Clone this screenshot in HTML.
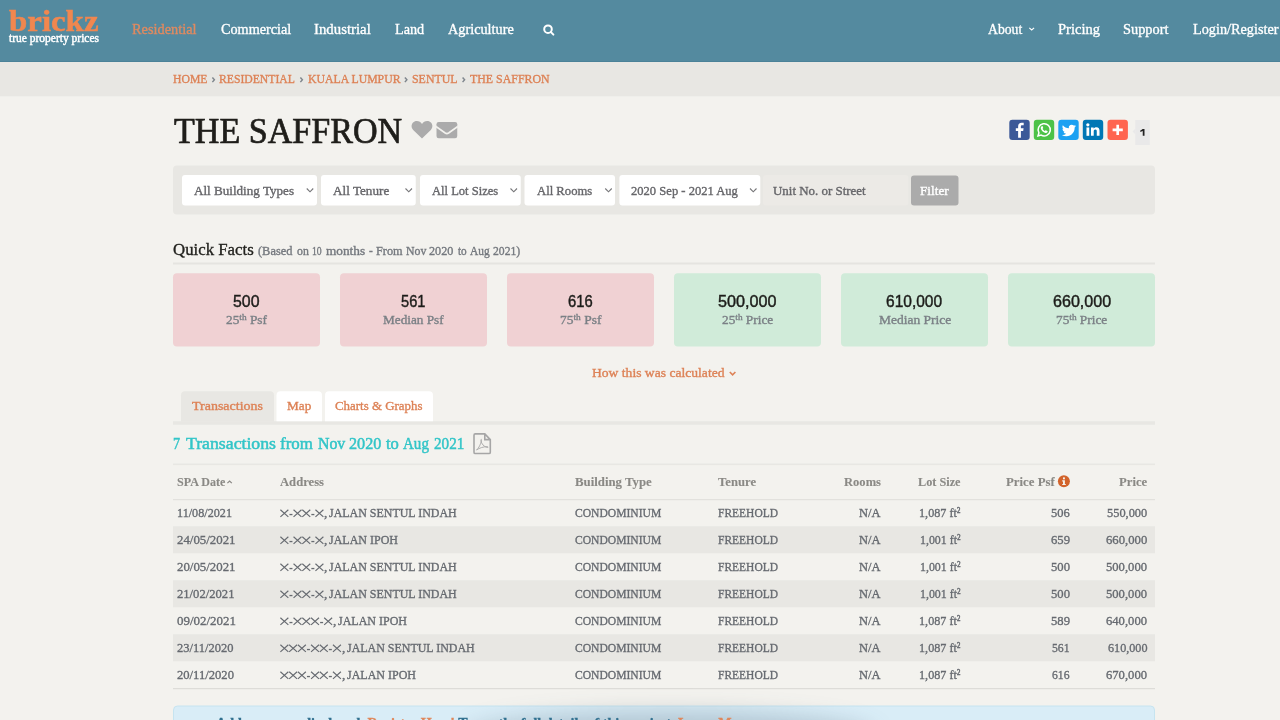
<!DOCTYPE html>
<html lang="en"><head><meta charset="utf-8"><title>THE SAFFRON - brickz</title>
<style>
html,body{margin:0;padding:0;width:1280px;height:720px;overflow:hidden;}
body{width:1280px;height:720px;overflow:hidden;position:relative;background:#f3f2ee;font-family:"Liberation Serif",serif;}
.t{position:absolute;white-space:nowrap;line-height:1;transform-origin:0 50%;-webkit-text-stroke:0.35px;}
.b{position:absolute;}
.L{position:absolute;left:0;top:0;width:1280px;height:720px;overflow:hidden;will-change:transform;}
svg{position:absolute;overflow:hidden;}
.W{position:absolute;left:0;top:0;width:1280px;height:720px;overflow:hidden;background:#f3f2ee;}
i.m{display:inline-block;width:0;height:0;}
sup{font-size:70%;line-height:0;vertical-align:baseline;position:relative;top:-0.5em;}
</style></head><body>
<div class="W">
<svg width="1280" height="720" viewBox="0 0 1280 720" style="left:0;top:0">
<rect x="0" y="0" width="1280" height="62" fill="#548a9f"/>
<rect x="0" y="61" width="1280" height="1" fill="#4b8298"/>
<rect x="0" y="62" width="1280" height="34.3" fill="#e8e7e3"/>
<g transform="translate(542.90,24.80) scale(1.0000,1.0000)"><circle cx="5.1" cy="4.4" r="3.8" fill="none" stroke="#fff" stroke-width="2"/><path d="M8 7.3 L10.5 9.8" stroke="#fff" stroke-width="2" stroke-linecap="round"/></g>
<g transform="translate(1028.60,27.30) scale(0.8857,0.8750)"><path d="M0.8 0.6 L3.5 3 L6.2 0.6" fill="none" stroke="#fff" stroke-width="1.3"/></g>
<g transform="translate(211.70,77.00) scale(0.8500,0.8000)"><path d="M0.8 0.6 L3.2 3.5 L0.8 6.4" fill="none" stroke="#7f868d" stroke-width="1.7"/></g>
<g transform="translate(299.70,77.00) scale(0.8500,0.8000)"><path d="M0.8 0.6 L3.2 3.5 L0.8 6.4" fill="none" stroke="#7f868d" stroke-width="1.7"/></g>
<g transform="translate(404.20,77.00) scale(0.8500,0.8000)"><path d="M0.8 0.6 L3.2 3.5 L0.8 6.4" fill="none" stroke="#7f868d" stroke-width="1.7"/></g>
<g transform="translate(461.90,77.00) scale(0.8500,0.8000)"><path d="M0.8 0.6 L3.2 3.5 L0.8 6.4" fill="none" stroke="#7f868d" stroke-width="1.7"/></g>
<g transform="translate(411.50,120.80) scale(1.0500,1.0353)"><path d="M10 17 L1.6 8.8 C-0.8 6.2 -0.3 2.2 2.9 0.7 C5.5 -0.5 8.6 0.6 10 3.1 C11.4 0.6 14.5 -0.5 17.1 0.7 C20.3 2.2 20.8 6.2 18.4 8.8 Z" fill="#ababab"/></g>
<g transform="translate(436.50,122.10) scale(1.0000,1.0286)"><rect x="0" y="0" width="20.75" height="15.75" rx="2.2" fill="#ababab"/><path d="M-0.5 4.3 L8.7 10.6 Q10.4 11.7 12.1 10.6 L21.25 4.3" fill="none" stroke="#f3f2ee" stroke-width="1.6"/></g>
<g transform="translate(1009.30,119.70) scale(1.0200,1.0200)"><rect width="20" height="20" rx="3" fill="#3b5998"/><path fill="#fff" transform="translate(-0.85,-0.75) scale(1.08)" d="M11.3 17 v-6.1 h2.1 l0.35-2.5 h-2.45 V6.9 c0-0.75 0.25-1.2 1.3-1.2 h1.25 V3.45 c-0.25-0.03-1-0.1-1.9-0.1 c-1.9 0-3.15 1.15-3.15 3.25 v1.8 H6.7 v2.5 h2.1 V17 z"/></g>
<g transform="translate(1033.80,119.70) scale(1.0200,1.0200)"><rect width="20" height="20" rx="3" fill="#4dc247"/><path fill="none" stroke="#fff" stroke-width="1.5" d="M4.1 15.9 L5 12.9 A6 6 0 1 1 7.2 15.1 Z"/><path fill="#fff" d="M7.6 6.6 c0.3-0.5 0.9-0.5 1.1 0 l0.5 1.2 c0.1 0.3 0 0.5-0.2 0.7 l-0.4 0.4 c0.4 0.9 1.3 1.8 2.3 2.3 l0.5-0.6 c0.2-0.2 0.4-0.3 0.7-0.1 l1.2 0.6 c0.4 0.2 0.4 0.6 0.2 1 c-0.4 0.7-1.2 1-2 0.9 c-2.300-0.400-4.300-2.400-4.700-4.600 c-0.100-0.700 0.200-1.400 0.800-1.800 z"/></g>
<g transform="translate(1058.30,119.70) scale(1.0200,1.0200)"><rect width="20" height="20" rx="3" fill="#1da1f2"/><g transform="translate(3.5,3.6) scale(0.58)"><path fill="#fff" d="M23.953 4.57a10 10 0 01-2.825.775 4.958 4.958 0 002.163-2.723c-.951.555-2.005.959-3.127 1.184a4.920 4.920 0 00-8.384 4.482C7.690 8.095 4.067 6.130 1.640 3.162a4.822 4.822 0 00-.666 2.475c0 1.710.870 3.213 2.188 4.096a4.904 4.904 0 01-2.228-.616v.060a4.923 4.923 0 003.946 4.827 4.996 4.996 0 01-2.212.085 4.936 4.936 0 004.604 3.417 9.867 9.867 0 01-6.102 2.105c-.390 0-.779-.023-1.170-.067a13.995 13.995 0 007.557 2.209c9.053 0 13.998-7.496 13.998-13.985 0-.210 0-.420-.015-.630A9.935 9.935 0 0024 4.590z"/></g></g>
<g transform="translate(1082.80,119.70) scale(1.0200,1.0200)"><rect width="20" height="20" rx="3" fill="#0077b5"/><rect x="3.6" y="7.6" width="2.7" height="8.2" fill="#fff"/><circle cx="4.95" cy="5" r="1.6" fill="#fff"/><path fill="#fff" d="M8 7.6 h2.6 v1.15 c0.5-0.85 1.5-1.4 2.7-1.4 c2.300 0 3.100 1.400 3.100 3.700 V15.800 h-2.700 v-4.200 c0-1.100-0.200-2-1.400-2 c-1.200 0-1.600 0.900-1.600 2 v4.200 H8 z"/></g>
<g transform="translate(1107.50,119.70) scale(1.0200,1.0200)"><rect width="20" height="20" rx="3" fill="#ff6550"/><path d="M10 5 V15 M5 10 H15" stroke="#fff" stroke-width="2.6"/></g>
<rect x="1135.3" y="120" width="14.5" height="25" fill="#e9e9e9"/>
<g transform="translate(1132.50,128.50) scale(1.0000,1.0000)"><path d="M3 0 L0 3 L3 6 Z" fill="#e9e9e9"/></g>
<g transform="translate(1140.30,129.00) scale(1.0000,1.0000)"><path d="M2.3 0 H4.2 V6.7 H2.45 V2.1 L0 2.9 V1.45 Q1.6 1 2.3 0 Z" fill="#222"/></g>
<rect x="173" y="165.5" width="982" height="49" rx="4.0" fill="#e8e7e3"/>
<rect x="182" y="175" width="135" height="30.5" rx="3.0" fill="#ffffff"/>
<g transform="translate(306.25,188.00) scale(1.0000,1.0000)"><path d="M0.5 0.5 L3.75 3.8 L7 0.5" fill="none" stroke="#77777a" stroke-width="1.15"/></g>
<rect x="321" y="175" width="94.75" height="30.5" rx="3.0" fill="#ffffff"/>
<g transform="translate(405.00,188.00) scale(1.0000,1.0000)"><path d="M0.5 0.5 L3.75 3.8 L7 0.5" fill="none" stroke="#77777a" stroke-width="1.15"/></g>
<rect x="420" y="175" width="100.75" height="30.5" rx="3.0" fill="#ffffff"/>
<g transform="translate(510.00,188.00) scale(1.0000,1.0000)"><path d="M0.5 0.5 L3.75 3.8 L7 0.5" fill="none" stroke="#77777a" stroke-width="1.15"/></g>
<rect x="524.5" y="175" width="90.5" height="30.5" rx="3.0" fill="#ffffff"/>
<g transform="translate(604.75,188.00) scale(1.0000,1.0000)"><path d="M0.5 0.5 L3.75 3.8 L7 0.5" fill="none" stroke="#77777a" stroke-width="1.15"/></g>
<rect x="619.4" y="175" width="140.9" height="30.5" rx="3.0" fill="#ffffff"/>
<g transform="translate(749.50,188.00) scale(1.0000,1.0000)"><path d="M0.5 0.5 L3.75 3.8 L7 0.5" fill="none" stroke="#77777a" stroke-width="1.15"/></g>
<rect x="763" y="175" width="145.4" height="30.5" rx="3.0" fill="#eceae6"/>
<rect x="911" y="175.5" width="47.5" height="30" rx="3.0" fill="#ababab"/>
<rect x="173" y="262.5" width="982" height="2" fill="#e5e4e0"/>
<rect x="173" y="273.2" width="147" height="73.3" rx="4.0" fill="#f0d1d3"/>
<rect x="340" y="273.2" width="147" height="73.3" rx="4.0" fill="#f0d1d3"/>
<rect x="507" y="273.2" width="147" height="73.3" rx="4.0" fill="#f0d1d3"/>
<rect x="674" y="273.2" width="147" height="73.3" rx="4.0" fill="#d0ebd9"/>
<rect x="841" y="273.2" width="147" height="73.3" rx="4.0" fill="#d0ebd9"/>
<rect x="1008" y="273.2" width="147" height="73.3" rx="4.0" fill="#d0ebd9"/>
<g transform="translate(729.30,371.60) scale(1.0000,1.0000)"><path d="M0.5 0.4 L3.3 3.2 L6.1 0.4" fill="none" stroke="#dd8256" stroke-width="1.6"/></g>
<rect x="173" y="421.25" width="982" height="3.5" fill="#e8e7e3"/>
<path d="M181 421.75 V395.25 Q181 391.25 185.0 391.25 H270.0 Q274 391.25 274 395.25 V421.75 Z" fill="#e8e7e3"/>
<path d="M276.5 421.25 V395.25 Q276.5 391.25 280.5 391.25 H318.0 Q322.0 391.25 322.0 395.25 V421.25 Z" fill="#ffffff"/>
<path d="M325 421.25 V395.25 Q325 391.25 329.0 391.25 H429.0 Q433 391.25 433 395.25 V421.25 Z" fill="#ffffff"/>
<g transform="translate(473.30,433.20) scale(1.0000,1.0345)"><path d="M0.7 2 Q0.7 0.7 2 0.7 H11.5 L17 6.2 V18.3 Q17 19.6 15.7 19.6 H2 Q0.7 19.6 0.7 18.3 Z M11.5 0.7 V6.2 H17" fill="none" stroke="#a6a6a6" stroke-width="1.6"/><path d="M3.2 16.3 C5.5 14.5 7.5 10.5 8.2 7 C8.5 5.6 7.4 5.6 7.6 7 C8.2 10.5 10.5 13 14 13.8 C15.2 14 15.2 13 14 13 C10 13 6 14.3 3.2 16.3 Z" fill="none" stroke="#a9a9a9" stroke-width="0.9"/></g>
<rect x="173" y="463.5" width="982" height="1.6" fill="#e8e7e3"/>
<rect x="173" y="499" width="982" height="1.2" fill="#e2e1dd"/>
<rect x="173" y="526.25" width="982" height="27" fill="#e8e7e3"/>
<rect x="173" y="580.25" width="982" height="27" fill="#e8e7e3"/>
<rect x="173" y="634.25" width="982" height="27" fill="#e8e7e3"/>
<rect x="173" y="688" width="982" height="1.2" fill="#dddcd8"/>
<g transform="translate(227.00,480.50) scale(1.0000,1.0000)"><path d="M0.4 2.7 L2.6 0.5 L4.8 2.7" fill="none" stroke="#8a8985" stroke-width="1.2"/></g>
<g transform="translate(1057.90,475.20) scale(1.0000,1.0000)"><circle cx="6" cy="6" r="6" fill="#d2632b"/><rect x="5.1" y="2.2" width="1.9" height="1.9" fill="#f3f2ee"/><path d="M4.3 5 H7 V8.7 H7.9 V9.9 H4.3 V8.7 H5.1 V6.2 H4.3 Z" fill="#f3f2ee"/></g>
<g transform="translate(280.00,509.40) scale(1.0000,1.0000)"><path d="M0.4 0.3 L8.35 7.45 M8.35 0.3 L0.4 7.45" fill="none" stroke="#666a70" stroke-width="1.15"/></g>
<rect x="289.45" y="513.9" width="3.0" height="1.3" fill="#666a70"/>
<g transform="translate(293.15,509.40) scale(1.0000,1.0000)"><path d="M0.4 0.3 L8.35 7.45 M8.35 0.3 L0.4 7.45" fill="none" stroke="#666a70" stroke-width="1.15"/></g>
<g transform="translate(301.90,509.40) scale(1.0000,1.0000)"><path d="M0.4 0.3 L8.35 7.45 M8.35 0.3 L0.4 7.45" fill="none" stroke="#666a70" stroke-width="1.15"/></g>
<rect x="311.35" y="513.9" width="3.0" height="1.3" fill="#666a70"/>
<g transform="translate(315.05,509.40) scale(1.0000,1.0000)"><path d="M0.4 0.3 L8.35 7.45 M8.35 0.3 L0.4 7.45" fill="none" stroke="#666a70" stroke-width="1.15"/></g>
<g transform="translate(280.00,536.40) scale(1.0000,1.0000)"><path d="M0.4 0.3 L8.35 7.45 M8.35 0.3 L0.4 7.45" fill="none" stroke="#666a70" stroke-width="1.15"/></g>
<rect x="289.45" y="540.9" width="3.0" height="1.3" fill="#666a70"/>
<g transform="translate(293.15,536.40) scale(1.0000,1.0000)"><path d="M0.4 0.3 L8.35 7.45 M8.35 0.3 L0.4 7.45" fill="none" stroke="#666a70" stroke-width="1.15"/></g>
<g transform="translate(301.90,536.40) scale(1.0000,1.0000)"><path d="M0.4 0.3 L8.35 7.45 M8.35 0.3 L0.4 7.45" fill="none" stroke="#666a70" stroke-width="1.15"/></g>
<rect x="311.35" y="540.9" width="3.0" height="1.3" fill="#666a70"/>
<g transform="translate(315.05,536.40) scale(1.0000,1.0000)"><path d="M0.4 0.3 L8.35 7.45 M8.35 0.3 L0.4 7.45" fill="none" stroke="#666a70" stroke-width="1.15"/></g>
<g transform="translate(280.00,563.40) scale(1.0000,1.0000)"><path d="M0.4 0.3 L8.35 7.45 M8.35 0.3 L0.4 7.45" fill="none" stroke="#666a70" stroke-width="1.15"/></g>
<rect x="289.45" y="567.9" width="3.0" height="1.3" fill="#666a70"/>
<g transform="translate(293.15,563.40) scale(1.0000,1.0000)"><path d="M0.4 0.3 L8.35 7.45 M8.35 0.3 L0.4 7.45" fill="none" stroke="#666a70" stroke-width="1.15"/></g>
<g transform="translate(301.90,563.40) scale(1.0000,1.0000)"><path d="M0.4 0.3 L8.35 7.45 M8.35 0.3 L0.4 7.45" fill="none" stroke="#666a70" stroke-width="1.15"/></g>
<rect x="311.35" y="567.9" width="3.0" height="1.3" fill="#666a70"/>
<g transform="translate(315.05,563.40) scale(1.0000,1.0000)"><path d="M0.4 0.3 L8.35 7.45 M8.35 0.3 L0.4 7.45" fill="none" stroke="#666a70" stroke-width="1.15"/></g>
<g transform="translate(280.00,590.40) scale(1.0000,1.0000)"><path d="M0.4 0.3 L8.35 7.45 M8.35 0.3 L0.4 7.45" fill="none" stroke="#666a70" stroke-width="1.15"/></g>
<rect x="289.45" y="594.9" width="3.0" height="1.3" fill="#666a70"/>
<g transform="translate(293.15,590.40) scale(1.0000,1.0000)"><path d="M0.4 0.3 L8.35 7.45 M8.35 0.3 L0.4 7.45" fill="none" stroke="#666a70" stroke-width="1.15"/></g>
<g transform="translate(301.90,590.40) scale(1.0000,1.0000)"><path d="M0.4 0.3 L8.35 7.45 M8.35 0.3 L0.4 7.45" fill="none" stroke="#666a70" stroke-width="1.15"/></g>
<rect x="311.35" y="594.9" width="3.0" height="1.3" fill="#666a70"/>
<g transform="translate(315.05,590.40) scale(1.0000,1.0000)"><path d="M0.4 0.3 L8.35 7.45 M8.35 0.3 L0.4 7.45" fill="none" stroke="#666a70" stroke-width="1.15"/></g>
<g transform="translate(280.00,617.40) scale(1.0000,1.0000)"><path d="M0.4 0.3 L8.35 7.45 M8.35 0.3 L0.4 7.45" fill="none" stroke="#666a70" stroke-width="1.15"/></g>
<rect x="289.45" y="621.9" width="3.0" height="1.3" fill="#666a70"/>
<g transform="translate(293.15,617.40) scale(1.0000,1.0000)"><path d="M0.4 0.3 L8.35 7.45 M8.35 0.3 L0.4 7.45" fill="none" stroke="#666a70" stroke-width="1.15"/></g>
<g transform="translate(301.90,617.40) scale(1.0000,1.0000)"><path d="M0.4 0.3 L8.35 7.45 M8.35 0.3 L0.4 7.45" fill="none" stroke="#666a70" stroke-width="1.15"/></g>
<g transform="translate(310.65,617.40) scale(1.0000,1.0000)"><path d="M0.4 0.3 L8.35 7.45 M8.35 0.3 L0.4 7.45" fill="none" stroke="#666a70" stroke-width="1.15"/></g>
<rect x="320.1" y="621.9" width="3.0" height="1.3" fill="#666a70"/>
<g transform="translate(323.80,617.40) scale(1.0000,1.0000)"><path d="M0.4 0.3 L8.35 7.45 M8.35 0.3 L0.4 7.45" fill="none" stroke="#666a70" stroke-width="1.15"/></g>
<g transform="translate(280.00,644.40) scale(1.0000,1.0000)"><path d="M0.4 0.3 L8.35 7.45 M8.35 0.3 L0.4 7.45" fill="none" stroke="#666a70" stroke-width="1.15"/></g>
<g transform="translate(288.75,644.40) scale(1.0000,1.0000)"><path d="M0.4 0.3 L8.35 7.45 M8.35 0.3 L0.4 7.45" fill="none" stroke="#666a70" stroke-width="1.15"/></g>
<g transform="translate(297.50,644.40) scale(1.0000,1.0000)"><path d="M0.4 0.3 L8.35 7.45 M8.35 0.3 L0.4 7.45" fill="none" stroke="#666a70" stroke-width="1.15"/></g>
<rect x="306.95" y="648.9" width="3.0" height="1.3" fill="#666a70"/>
<g transform="translate(310.65,644.40) scale(1.0000,1.0000)"><path d="M0.4 0.3 L8.35 7.45 M8.35 0.3 L0.4 7.45" fill="none" stroke="#666a70" stroke-width="1.15"/></g>
<g transform="translate(319.40,644.40) scale(1.0000,1.0000)"><path d="M0.4 0.3 L8.35 7.45 M8.35 0.3 L0.4 7.45" fill="none" stroke="#666a70" stroke-width="1.15"/></g>
<rect x="328.85" y="648.9" width="3.0" height="1.3" fill="#666a70"/>
<g transform="translate(332.55,644.40) scale(1.0000,1.0000)"><path d="M0.4 0.3 L8.35 7.45 M8.35 0.3 L0.4 7.45" fill="none" stroke="#666a70" stroke-width="1.15"/></g>
<g transform="translate(280.00,671.40) scale(1.0000,1.0000)"><path d="M0.4 0.3 L8.35 7.45 M8.35 0.3 L0.4 7.45" fill="none" stroke="#666a70" stroke-width="1.15"/></g>
<g transform="translate(288.75,671.40) scale(1.0000,1.0000)"><path d="M0.4 0.3 L8.35 7.45 M8.35 0.3 L0.4 7.45" fill="none" stroke="#666a70" stroke-width="1.15"/></g>
<g transform="translate(297.50,671.40) scale(1.0000,1.0000)"><path d="M0.4 0.3 L8.35 7.45 M8.35 0.3 L0.4 7.45" fill="none" stroke="#666a70" stroke-width="1.15"/></g>
<rect x="306.95" y="675.9" width="3.0" height="1.3" fill="#666a70"/>
<g transform="translate(310.65,671.40) scale(1.0000,1.0000)"><path d="M0.4 0.3 L8.35 7.45 M8.35 0.3 L0.4 7.45" fill="none" stroke="#666a70" stroke-width="1.15"/></g>
<g transform="translate(319.40,671.40) scale(1.0000,1.0000)"><path d="M0.4 0.3 L8.35 7.45 M8.35 0.3 L0.4 7.45" fill="none" stroke="#666a70" stroke-width="1.15"/></g>
<rect x="328.85" y="675.9" width="3.0" height="1.3" fill="#666a70"/>
<g transform="translate(332.55,671.40) scale(1.0000,1.0000)"><path d="M0.4 0.3 L8.35 7.45 M8.35 0.3 L0.4 7.45" fill="none" stroke="#666a70" stroke-width="1.15"/></g>
<rect x="173.5" y="706" width="981" height="30" rx="4" fill="#d9edf7" stroke="#c6e4f0" stroke-width="1"/>
</svg>
<div class="b" style="left:465px;top:712px;width:410px;height:50px;border-radius:50%;background:rgba(50,70,90,0.24);filter:blur(11px);"></div>
<div class="L">
<span class="t" style='left:9px;top:6.02px;font-size:30px;color:#f0874f;font-weight:700;transform:scaleX(1.0961);-webkit-text-stroke:0.5px;'>brickz</span>
<span class="t" style='left:9px;top:33.02px;font-size:11.5px;color:#ffffff;transform:scaleX(0.9995);-webkit-text-stroke:0.45px;'>true property prices</span>
<span class="t" style='left:132px;top:21.02px;font-size:15.5px;color:#e08a60;transform:scaleX(0.9247);'>Residential</span>
<span class="t" style='left:220.5px;top:21.02px;font-size:15.5px;color:#ffffff;transform:scaleX(0.9168);'>Commercial</span>
<span class="t" style='left:314px;top:21.02px;font-size:15.5px;color:#ffffff;transform:scaleX(0.9553);'>Industrial</span>
<span class="t" style='left:394.5px;top:21.02px;font-size:15.5px;color:#ffffff;transform:scaleX(0.9181);'>Land</span>
<span class="t" style='left:447.5px;top:21.02px;font-size:15.5px;color:#ffffff;transform:scaleX(0.9202);'>Agriculture</span>
<span class="t" style='left:988.25px;top:21.02px;font-size:15.5px;color:#ffffff;transform:scaleX(0.8839);'>About</span>
<span class="t" style='left:1058px;top:21.02px;font-size:15.5px;color:#ffffff;transform:scaleX(0.9379);'>Pricing</span>
<span class="t" style='left:1123.25px;top:21.02px;font-size:15.5px;color:#ffffff;transform:scaleX(0.9268);'>Support</span>
<span class="t" style='left:1192.5px;top:21.02px;font-size:15.5px;color:#ffffff;transform:scaleX(0.9194);'>Login/Register</span>
<span class="t" style='left:173px;top:73.02px;font-size:12.5px;color:#dd8256;transform:scaleX(0.9372);'>HOME</span>
<span class="t" style='left:219.4px;top:73.02px;font-size:12.5px;color:#dd8256;transform:scaleX(0.9342);'>RESIDENTIAL</span>
<span class="t" style='left:307.5px;top:73.02px;font-size:12.5px;color:#dd8256;transform:scaleX(0.9412);'>KUALA LUMPUR</span>
<span class="t" style='left:411.9px;top:73.02px;font-size:12.5px;color:#dd8256;transform:scaleX(0.9515);'>SENTUL</span>
<span class="t" style='left:469.7px;top:73.02px;font-size:12.5px;color:#dd8256;transform:scaleX(0.9522);'>THE SAFFRON</span>
<span class="t" style='left:173.75px;top:114.02px;font-size:35px;color:#1f1e1a;transform:scaleX(0.9739);-webkit-text-stroke:0.7px;'>THE SAFFRON</span>
<span class="t" style='left:194.25px;top:185.02px;font-size:12.25px;color:#66666a;transform:scaleX(1.0692);'>All Building Types</span>
<span class="t" style='left:333px;top:185.02px;font-size:12.25px;color:#66666a;transform:scaleX(1.0749);'>All Tenure</span>
<span class="t" style='left:431.75px;top:185.02px;font-size:12.25px;color:#66666a;transform:scaleX(1.0246);'>All Lot Sizes</span>
<span class="t" style='left:536.75px;top:185.02px;font-size:12.25px;color:#66666a;transform:scaleX(1.0339);'>All Rooms</span>
<span class="t" style='left:630.6px;top:185.02px;font-size:12.25px;color:#66666a;transform:scaleX(1.0267);'>2020 Sep - 2021 Aug</span>
<span class="t" style='left:773px;top:185.02px;font-size:12.25px;color:#66666a;transform:scaleX(1.0549);'>Unit No. or Street</span>
<span class="t" style='left:920.3px;top:185.02px;font-size:12.25px;color:#ffffff;transform:scaleX(1.0811);'>Filter</span>
<span class="t" style='left:173px;top:241.02px;font-size:17px;color:#22221e;transform:scaleX(0.9885);'>Quick Facts</span>
<span class="t" style='left:258.4px;top:245.02px;font-size:12px;color:#74787e;transform:scaleX(1.0322);'>(Based</span>
<span class="t" style='left:296.6px;top:245.02px;font-size:12px;color:#74787e;transform:scaleX(0.9833);'>on</span>
<span class="t" style='left:312.2px;top:245.02px;font-size:12px;color:#74787e;transform:scaleX(0.8083);'>10</span>
<span class="t" style='left:325.6px;top:245.02px;font-size:12px;color:#74787e;transform:scaleX(1.1063);'>months</span>
<span class="t" style='left:368.75px;top:245.02px;font-size:12px;color:#74787e;transform:scaleX(0.9375);'>-</span>
<span class="t" style='left:375.6px;top:245.02px;font-size:12px;color:#74787e;transform:scaleX(1.0225);'>From</span>
<span class="t" style='left:405.9px;top:245.02px;font-size:12px;color:#74787e;transform:scaleX(0.9844);'>Nov</span>
<span class="t" style='left:429.4px;top:245.02px;font-size:12px;color:#74787e;transform:scaleX(1.0146);'>2020</span>
<span class="t" style='left:457.5px;top:245.02px;font-size:12px;color:#74787e;transform:scaleX(0.9365);'>to</span>
<span class="t" style='left:470px;top:245.02px;font-size:12px;color:#74787e;transform:scaleX(0.9530);'>Aug</span>
<span class="t" style='left:492.8px;top:245.02px;font-size:12px;color:#74787e;transform:scaleX(0.9714);'>2021)</span>
<span class="t" style='left:233.3px;top:293.02px;font-size:17px;color:#1d1d1a;font-family:"Liberation Sans", sans-serif;transform:scaleX(0.9339);-webkit-text-stroke:0.45px;'>500</span>
<span class="t" style='left:401.4px;top:293.02px;font-size:17px;color:#1d1d1a;font-family:"Liberation Sans", sans-serif;transform:scaleX(0.8599);-webkit-text-stroke:0.45px;'>561</span>
<span class="t" style='left:568.3px;top:293.02px;font-size:17px;color:#1d1d1a;font-family:"Liberation Sans", sans-serif;transform:scaleX(0.8705);-webkit-text-stroke:0.45px;'>616</span>
<span class="t" style='left:718.3px;top:293.02px;font-size:17px;color:#1d1d1a;font-family:"Liberation Sans", sans-serif;transform:scaleX(0.9519);-webkit-text-stroke:0.45px;'>500,000</span>
<span class="t" style='left:886.3px;top:293.02px;font-size:17px;color:#1d1d1a;font-family:"Liberation Sans", sans-serif;transform:scaleX(0.9129);-webkit-text-stroke:0.45px;'>610,000</span>
<span class="t" style='left:1052.6px;top:293.02px;font-size:17px;color:#1d1d1a;font-family:"Liberation Sans", sans-serif;transform:scaleX(0.9471);-webkit-text-stroke:0.45px;'>660,000</span>
<span class="t" style='left:226px;top:314.02px;font-size:12.25px;color:#7b8086;transform:scaleX(1.0888);'>25<sup>th</sup> Psf</span>
<span class="t" style='left:383.3px;top:314.02px;font-size:12.25px;color:#7b8086;transform:scaleX(1.0809);'>Median Psf</span>
<span class="t" style='left:559.8px;top:314.02px;font-size:12.25px;color:#7b8086;transform:scaleX(1.0994);'>75<sup>th</sup> Psf</span>
<span class="t" style='left:721.8px;top:314.02px;font-size:12.25px;color:#7b8086;transform:scaleX(1.0858);'>25<sup>th</sup> Price</span>
<span class="t" style='left:878.6px;top:314.02px;font-size:12.25px;color:#7b8086;transform:scaleX(1.1012);'>Median Price</span>
<span class="t" style='left:1055.8px;top:314.02px;font-size:12.25px;color:#7b8086;transform:scaleX(1.0858);'>75<sup>th</sup> Price</span>
<span class="t" style='left:591.9px;top:367.02px;font-size:12.75px;color:#dd8256;transform:scaleX(1.0661);'>How this was calculated</span>
<span class="t" style='left:192px;top:400.02px;font-size:12.5px;color:#dd8256;transform:scaleX(1.1192);'>Transactions</span>
<span class="t" style='left:287px;top:400.02px;font-size:12.5px;color:#dd8256;transform:scaleX(1.0579);'>Map</span>
<span class="t" style='left:335px;top:400.02px;font-size:12.5px;color:#dd8256;transform:scaleX(1.0328);'>Charts &amp; Graphs</span>
<span class="t" style='left:173.2px;top:435.02px;font-size:17px;color:#32c5c8;transform:scaleX(0.8294);-webkit-text-stroke:0.5px;'>7</span>
<span class="t" style='left:185.9px;top:435.02px;font-size:17px;color:#32c5c8;transform:scaleX(1.0433);-webkit-text-stroke:0.5px;'>Transactions</span>
<span class="t" style='left:280.4px;top:435.02px;font-size:17px;color:#32c5c8;transform:scaleX(0.9956);-webkit-text-stroke:0.5px;'>from</span>
<span class="t" style='left:317.5px;top:435.02px;font-size:17px;color:#32c5c8;transform:scaleX(0.9323);-webkit-text-stroke:0.5px;'>Nov</span>
<span class="t" style='left:349px;top:435.02px;font-size:17px;color:#32c5c8;transform:scaleX(0.9500);-webkit-text-stroke:0.5px;'>2020</span>
<span class="t" style='left:385.6px;top:435.02px;font-size:17px;color:#32c5c8;transform:scaleX(0.9747);-webkit-text-stroke:0.5px;'>to</span>
<span class="t" style='left:403.3px;top:435.02px;font-size:17px;color:#32c5c8;transform:scaleX(0.8845);-webkit-text-stroke:0.5px;'>Aug</span>
<span class="t" style='left:434.2px;top:435.02px;font-size:17px;color:#32c5c8;transform:scaleX(0.8912);-webkit-text-stroke:0.5px;'>2021</span>
<span class="t" style='left:176.9px;top:475.02px;font-size:13px;color:#8a8985;font-weight:700;transform:scaleX(0.9276);-webkit-text-stroke:0.1px;'>SPA Date</span>
<span class="t" style='left:280px;top:475.02px;font-size:13px;color:#8a8985;font-weight:700;transform:scaleX(0.9717);-webkit-text-stroke:0.1px;'>Address</span>
<span class="t" style='left:575px;top:475.02px;font-size:13px;color:#8a8985;font-weight:700;transform:scaleX(0.9850);-webkit-text-stroke:0.1px;'>Building Type</span>
<span class="t" style='left:717.5px;top:475.02px;font-size:13px;color:#8a8985;font-weight:700;transform:scaleX(0.9740);-webkit-text-stroke:0.1px;'>Tenure</span>
<span class="t" style='left:843.75px;top:475.02px;font-size:13px;color:#8a8985;font-weight:700;transform:scaleX(0.9665);-webkit-text-stroke:0.1px;'>Rooms</span>
<span class="t" style='left:918px;top:475.02px;font-size:13px;color:#8a8985;font-weight:700;transform:scaleX(0.9415);-webkit-text-stroke:0.1px;'>Lot Size</span>
<span class="t" style='left:1006.25px;top:475.02px;font-size:13px;color:#8a8985;font-weight:700;transform:scaleX(0.9858);-webkit-text-stroke:0.1px;'>Price Psf</span>
<span class="t" style='left:1118.75px;top:475.02px;font-size:13px;color:#8a8985;font-weight:700;transform:scaleX(0.9784);-webkit-text-stroke:0.1px;'>Price</span>
<span class="t" style='left:177px;top:506.02px;font-size:13.5px;color:#666a70;transform:scaleX(0.9014);'>11/08/2021</span>
<span class="t" style='left:324.09999999999997px;top:506.02px;font-size:13.5px;color:#666a70;transform:scaleX(0.9990);'>,</span>
<span class="t" style='left:329.04999999999995px;top:506.02px;font-size:13.5px;color:#666a70;transform:scaleX(0.8856);'>JALAN SENTUL INDAH</span>
<span class="t" style='left:575px;top:506.02px;font-size:13.5px;color:#666a70;transform:scaleX(0.8582);'>CONDOMINIUM</span>
<span class="t" style='left:717.5px;top:506.02px;font-size:13.5px;color:#666a70;transform:scaleX(0.8511);'>FREEHOLD</span>
<span class="t" style='left:859.25px;top:506.02px;font-size:13.5px;color:#666a70;transform:scaleX(0.9247);'>N/A</span>
<span class="t" style='left:919px;top:506.02px;font-size:13.5px;color:#666a70;transform:scaleX(0.9013);'>1,087 ft²</span>
<span class="t" style='left:1050.75px;top:506.02px;font-size:13.5px;color:#666a70;transform:scaleX(0.9259);'>506</span>
<span class="t" style='left:1106.75px;top:506.02px;font-size:13.5px;color:#666a70;transform:scaleX(0.9174);'>550,000</span>
<span class="t" style='left:177px;top:533.02px;font-size:13.5px;color:#666a70;transform:scaleX(0.9510);'>24/05/2021</span>
<span class="t" style='left:324.09999999999997px;top:533.02px;font-size:13.5px;color:#666a70;transform:scaleX(0.9990);'>,</span>
<span class="t" style='left:329.04999999999995px;top:533.02px;font-size:13.5px;color:#666a70;transform:scaleX(0.8889);'>JALAN IPOH</span>
<span class="t" style='left:575px;top:533.02px;font-size:13.5px;color:#666a70;transform:scaleX(0.8582);'>CONDOMINIUM</span>
<span class="t" style='left:717.5px;top:533.02px;font-size:13.5px;color:#666a70;transform:scaleX(0.8511);'>FREEHOLD</span>
<span class="t" style='left:859.25px;top:533.02px;font-size:13.5px;color:#666a70;transform:scaleX(0.9247);'>N/A</span>
<span class="t" style='left:920px;top:533.02px;font-size:13.5px;color:#666a70;transform:scaleX(0.8795);'>1,001 ft²</span>
<span class="t" style='left:1050.5px;top:533.02px;font-size:13.5px;color:#666a70;transform:scaleX(0.9383);'>659</span>
<span class="t" style='left:1105.75px;top:533.02px;font-size:13.5px;color:#666a70;transform:scaleX(0.9402);'>660,000</span>
<span class="t" style='left:177px;top:560.02px;font-size:13.5px;color:#666a70;transform:scaleX(0.9510);'>20/05/2021</span>
<span class="t" style='left:324.09999999999997px;top:560.02px;font-size:13.5px;color:#666a70;transform:scaleX(0.9990);'>,</span>
<span class="t" style='left:329.04999999999995px;top:560.02px;font-size:13.5px;color:#666a70;transform:scaleX(0.8856);'>JALAN SENTUL INDAH</span>
<span class="t" style='left:575px;top:560.02px;font-size:13.5px;color:#666a70;transform:scaleX(0.8582);'>CONDOMINIUM</span>
<span class="t" style='left:717.5px;top:560.02px;font-size:13.5px;color:#666a70;transform:scaleX(0.8511);'>FREEHOLD</span>
<span class="t" style='left:859.25px;top:560.02px;font-size:13.5px;color:#666a70;transform:scaleX(0.9247);'>N/A</span>
<span class="t" style='left:920px;top:560.02px;font-size:13.5px;color:#666a70;transform:scaleX(0.8795);'>1,001 ft²</span>
<span class="t" style='left:1050.5px;top:560.02px;font-size:13.5px;color:#666a70;transform:scaleX(0.9383);'>500</span>
<span class="t" style='left:1106px;top:560.02px;font-size:13.5px;color:#666a70;transform:scaleX(0.9345);'>500,000</span>
<span class="t" style='left:177px;top:587.02px;font-size:13.5px;color:#666a70;transform:scaleX(0.9347);'>21/02/2021</span>
<span class="t" style='left:324.09999999999997px;top:587.02px;font-size:13.5px;color:#666a70;transform:scaleX(0.9990);'>,</span>
<span class="t" style='left:329.04999999999995px;top:587.02px;font-size:13.5px;color:#666a70;transform:scaleX(0.8856);'>JALAN SENTUL INDAH</span>
<span class="t" style='left:575px;top:587.02px;font-size:13.5px;color:#666a70;transform:scaleX(0.8582);'>CONDOMINIUM</span>
<span class="t" style='left:717.5px;top:587.02px;font-size:13.5px;color:#666a70;transform:scaleX(0.8511);'>FREEHOLD</span>
<span class="t" style='left:859.25px;top:587.02px;font-size:13.5px;color:#666a70;transform:scaleX(0.9247);'>N/A</span>
<span class="t" style='left:920px;top:587.02px;font-size:13.5px;color:#666a70;transform:scaleX(0.8795);'>1,001 ft²</span>
<span class="t" style='left:1050.5px;top:587.02px;font-size:13.5px;color:#666a70;transform:scaleX(0.9383);'>500</span>
<span class="t" style='left:1106px;top:587.02px;font-size:13.5px;color:#666a70;transform:scaleX(0.9345);'>500,000</span>
<span class="t" style='left:177px;top:614.02px;font-size:13.5px;color:#666a70;transform:scaleX(0.9591);'>09/02/2021</span>
<span class="t" style='left:332.84999999999997px;top:614.02px;font-size:13.5px;color:#666a70;transform:scaleX(0.9990);'>,</span>
<span class="t" style='left:337.79999999999995px;top:614.02px;font-size:13.5px;color:#666a70;transform:scaleX(0.8889);'>JALAN IPOH</span>
<span class="t" style='left:575px;top:614.02px;font-size:13.5px;color:#666a70;transform:scaleX(0.8582);'>CONDOMINIUM</span>
<span class="t" style='left:717.5px;top:614.02px;font-size:13.5px;color:#666a70;transform:scaleX(0.8511);'>FREEHOLD</span>
<span class="t" style='left:859.25px;top:614.02px;font-size:13.5px;color:#666a70;transform:scaleX(0.9247);'>N/A</span>
<span class="t" style='left:919px;top:614.02px;font-size:13.5px;color:#666a70;transform:scaleX(0.9013);'>1,087 ft²</span>
<span class="t" style='left:1050.5px;top:614.02px;font-size:13.5px;color:#666a70;transform:scaleX(0.9383);'>589</span>
<span class="t" style='left:1106px;top:614.02px;font-size:13.5px;color:#666a70;transform:scaleX(0.9345);'>640,000</span>
<span class="t" style='left:177px;top:641.02px;font-size:13.5px;color:#666a70;transform:scaleX(0.9260);'>23/11/2020</span>
<span class="t" style='left:341.59999999999997px;top:641.02px;font-size:13.5px;color:#666a70;transform:scaleX(0.9990);'>,</span>
<span class="t" style='left:346.54999999999995px;top:641.02px;font-size:13.5px;color:#666a70;transform:scaleX(0.8856);'>JALAN SENTUL INDAH</span>
<span class="t" style='left:575px;top:641.02px;font-size:13.5px;color:#666a70;transform:scaleX(0.8582);'>CONDOMINIUM</span>
<span class="t" style='left:717.5px;top:641.02px;font-size:13.5px;color:#666a70;transform:scaleX(0.8511);'>FREEHOLD</span>
<span class="t" style='left:859.25px;top:641.02px;font-size:13.5px;color:#666a70;transform:scaleX(0.9247);'>N/A</span>
<span class="t" style='left:919px;top:641.02px;font-size:13.5px;color:#666a70;transform:scaleX(0.9013);'>1,087 ft²</span>
<span class="t" style='left:1052px;top:641.02px;font-size:13.5px;color:#666a70;transform:scaleX(0.8642);'>561</span>
<span class="t" style='left:1107.5px;top:641.02px;font-size:13.5px;color:#666a70;transform:scaleX(0.9003);'>610,000</span>
<span class="t" style='left:177px;top:668.02px;font-size:13.5px;color:#666a70;transform:scaleX(0.9342);'>20/11/2020</span>
<span class="t" style='left:341.59999999999997px;top:668.02px;font-size:13.5px;color:#666a70;transform:scaleX(0.9990);'>,</span>
<span class="t" style='left:346.54999999999995px;top:668.02px;font-size:13.5px;color:#666a70;transform:scaleX(0.8889);'>JALAN IPOH</span>
<span class="t" style='left:575px;top:668.02px;font-size:13.5px;color:#666a70;transform:scaleX(0.8582);'>CONDOMINIUM</span>
<span class="t" style='left:717.5px;top:668.02px;font-size:13.5px;color:#666a70;transform:scaleX(0.8511);'>FREEHOLD</span>
<span class="t" style='left:859.25px;top:668.02px;font-size:13.5px;color:#666a70;transform:scaleX(0.9247);'>N/A</span>
<span class="t" style='left:919px;top:668.02px;font-size:13.5px;color:#666a70;transform:scaleX(0.9013);'>1,087 ft²</span>
<span class="t" style='left:1052px;top:668.02px;font-size:13.5px;color:#666a70;transform:scaleX(0.8642);'>616</span>
<span class="t" style='left:1106px;top:668.02px;font-size:13.5px;color:#666a70;transform:scaleX(0.9345);'>670,000</span>
<span class="t" style='left:216px;top:716.02px;font-size:15px;color:#31708f;font-weight:700;transform:scaleX(0.9400);'>Addresses are displayed. <span style="color:#df875b">Register Here!</span> To see the full details of this project. <span style="color:#df875b">Learn More</span></span>
</div>
</div>
</body></html>
